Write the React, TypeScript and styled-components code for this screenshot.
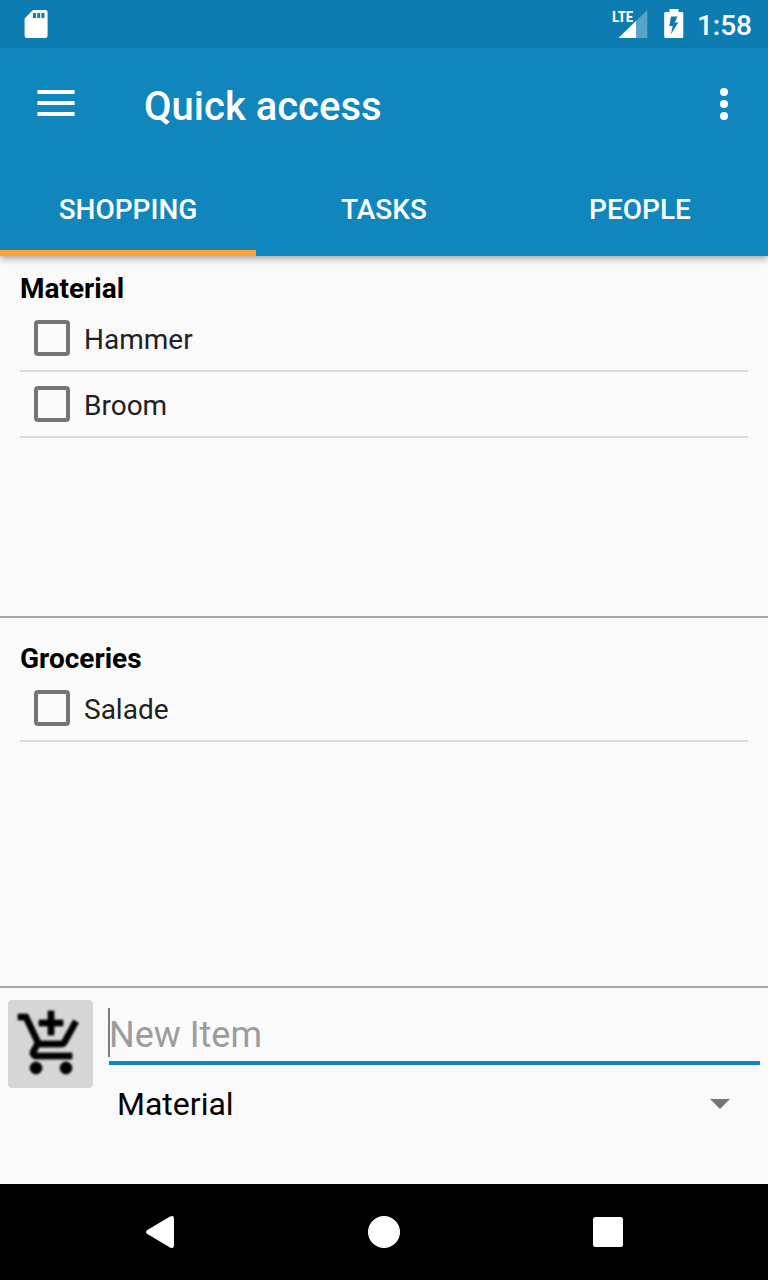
import React, { useState } from "react";
import styled, { createGlobalStyle } from "styled-components";

const color = {
  primary: "#1186bd",
  primaryDark: "#0d7db1",
  accent: "#ffa233",
  page: "#fafafa",
  rule: "#dadada",
  divider: "#a9a9a9",
  control: "#757575",
  hint: "#9c9c9c",
};

const GlobalStyle = createGlobalStyle`
  *, *::before, *::after { box-sizing: border-box; }
  body {
    margin: 0;
    background: ${color.page};
    font-family: Roboto, "Liberation Sans", sans-serif;
    color: #000;
  }
  button, input, select { font-family: inherit; }
  svg { display: block; }
`;

const Screen = styled.div`
  display: flex;
  flex-direction: column;
  min-height: 100vh;
`;

const StatusBar = styled.div`
  position: relative;
  z-index: 1;
  display: flex;
  align-items: center;
  height: 48px;
  padding: 0 16px 0 24px;
  background: ${color.primaryDark};
  color: #fff;
`;

const StatusIcons = styled.div`
  display: flex;
  align-items: center;
  gap: 16px;
  margin-left: auto;
`;

const Clock = styled.time`
  font-size: 28px;
  font-weight: 500;
  line-height: 44px;
  padding-top: 4px;
  margin-left: -3px;
`;

const Header = styled.header`
  position: relative;
  background: ${color.primary};
  color: #fff;
  box-shadow: 0 2px 8px rgba(0, 0, 0, 0.4);
`;

const Toolbar = styled.div`
  display: flex;
  align-items: center;
  height: 112px;
`;

const IconButton = styled.button<{ $width: number }>`
  display: flex;
  align-items: center;
  justify-content: center;
  width: ${(p) => p.$width}px;
  height: 112px;
  padding: 0;
  border: 0;
  background: none;
  color: inherit;
`;

const Title = styled.h1`
  flex: 1;
  margin: 0;
  padding: 6px 0 0 32px;
  font-size: 40px;
  font-weight: 500;
  line-height: 48px;
`;

const Tabs = styled.div`
  display: flex;
  height: 96px;
`;

const Tab = styled.button<{ $active: boolean }>`
  flex: 1;
  padding: 10px 0 0;
  border: 0;
  border-bottom: 6px solid ${(p) => (p.$active ? color.accent : "transparent")};
  background: none;
  color: inherit;
  font-size: 28px;
  font-weight: 500;
  line-height: 32px;
  text-transform: uppercase;
`;

const Main = styled.main`
  display: flex;
  flex: 1;
  flex-direction: column;
`;

const Section = styled.section<{ $spaced: boolean }>`
  flex: 1 0 auto;
  padding: ${(p) => (p.$spaced ? 24 : 16)}px 20px 0;
  border-bottom: 2px solid ${color.divider};
`;

const SectionTitle = styled.h2`
  margin: 0;
  font-size: 28px;
  font-weight: 700;
  line-height: 34px;
`;

const List = styled.ul`
  min-height: 132px;
  margin: 0;
  padding: 0;
  list-style: none;
`;

const Row = styled.li`
  border-bottom: 2px solid ${color.rule};
`;

const ItemLabel = styled.label`
  display: flex;
  align-items: center;
  gap: 14px;
  height: 64px;
  padding-left: 14px;
  color: #212121;
  font-size: 28px;
  line-height: 36px;
`;

const ItemText = styled.span`
  padding-top: 4px;
`;

const Checkbox = styled.input`
  appearance: none;
  width: 36px;
  height: 36px;
  margin: 0;
  border: 4px solid ${color.control};
  border-radius: 4px;

  &:checked {
    border-color: ${color.primary};
    background: ${color.primary};
  }
`;

const Form = styled.form`
  display: flex;
  align-items: flex-start;
  gap: 16px;
  min-height: 196px;
  padding: 12px 8px;
`;

const AddButton = styled.button`
  display: flex;
  align-items: center;
  justify-content: center;
  width: 85px;
  height: 88px;
  padding: 0;
  border: 0;
  border-radius: 4px;
  background: #d6d7d7;
`;

const Fields = styled.div`
  flex: 1;
  min-width: 0;
`;

const FieldBox = styled.div`
  position: relative;
`;

const TextInput = styled.input`
  display: block;
  width: 100%;
  height: 65px;
  padding: 8px 0 0;
  border: 0;
  border-bottom: 4px solid ${color.primary};
  border-radius: 0;
  outline: 0;
  background: none;
  font-size: 36px;
  caret-color: transparent;

  &::placeholder { color: ${color.hint}; opacity: 1; }
`;

const Caret = styled.span`
  position: absolute;
  top: 8px;
  left: -1px;
  width: 2px;
  height: 49px;
  background: #7c7c7c;
`;

const Select = styled.select`
  display: block;
  appearance: none;
  width: 100%;
  height: 78px;
  padding: 0 64px 0 8px;
  border: 0;
  background: none;
  color: #000;
  font-size: 32px;
`;

const SelectArrow = styled.svg`
  position: absolute;
  top: 34px;
  right: 30px;
  pointer-events: none;
`;

const NavBar = styled.nav`
  display: flex;
  height: 96px;
  padding: 0 48px;
  background: #000;
`;

const NavButton = styled.button`
  display: flex;
  flex: 1;
  align-items: center;
  justify-content: center;
  padding: 0;
  border: 0;
  background: none;
`;

const SdCardIcon = () => (
  <svg width="24" height="30" viewBox="0 0 24 30" fill="#fff" aria-hidden="true">
    <path
      fillRule="evenodd"
      d="M9 1h12.4a2.2 2.2 0 0 1 2.2 2.2v23.6a2.2 2.2 0 0 1-2.2 2.2H2.8a2.2 2.2 0 0 1-2.2-2.2V9.4zM9 4v5h3V4zM13.200 4v5h3V4zM17.400 4v5h3V4z"
    />
  </svg>
);

const SignalIcon = () => (
  <svg width="36" height="30" viewBox="0 0 36 30" aria-hidden="true">
    <path d="M35.300 1v28H6.500z" fill="#fff" opacity="0.3" />
    <path d="M24 12v17H6.500z" fill="#fff" />
    <text
      x="0"
      y="13"
      fill="#fff"
      fontSize="15"
      fontWeight="700"
      fontFamily='"Liberation Sans Narrow", "Roboto Condensed", Roboto, sans-serif'
    >
      LTE
    </text>
  </svg>
);

const BatteryIcon = () => (
  <svg width="20" height="30" viewBox="0 0 20 30" fill="#fff" aria-hidden="true">
    <path
      fillRule="evenodd"
      d="M5.500 0h9v3H18a1.300 1.300 0 0 1 1.300 1.300v23.400A1.300 1.300 0 0 1 18 29H1.500A1.300 1.300 0 0 1 .2 27.700V4.300A1.300 1.300 0 0 1 1.500 3h4zM7 7.500L5.200 17h3.500L6.800 25.500L14.300 13.500H10.800L13.500 7.500z"
    />
  </svg>
);

const MenuIcon = () => (
  <svg width="38" height="28" viewBox="0 0 38 28" fill="#fff" aria-hidden="true">
    <path d="M.4 0h37.200v4H.4zM.4 11h37.200v4H.4zM.4 22h37.200v4H.4z" />
  </svg>
);

const MoreIcon = () => (
  <svg width="8" height="32" viewBox="0 0 8 32" fill="#fff" aria-hidden="true">
    <circle cx="4" cy="4" r="4" />
    <circle cx="4" cy="16" r="4" />
    <circle cx="4" cy="28" r="4" />
  </svg>
);

const AddCartIcon = () => (
  <svg width="72" height="72" viewBox="0 0 24 24" aria-hidden="true">
    <filter id="soften" colorInterpolationFilters="sRGB">
      <feGaussianBlur stdDeviation="0.3" />
    </filter>
    <path
      filter="url(#soften)"
      stroke="#000"
      strokeWidth="0.25"
      d="M11 9h2V6h3V4h-3V1h-2v3H8v2h3v3zm-4 9c-1.100 0-1.990.9-1.990 2S5.900 22 7 22s2-.9 2-2-.9-2-2-2zm10 0c-1.100 0-1.990.9-1.990 2s.89 2 1.990 2 2-.9 2-2-.9-2-2-2zm-9.830-3.250l.03-.12.9-1.630h7.450c.75 0 1.410-.41 1.750-1.030l3.860-7.010L19.420 4h-.01l-1.100 2-2.760 5H8.530l-.13-.27L6.160 6l-.95-2-.94-2H1v2h2l3.600 7.590-1.350 2.450c-.16.28-.25.61-.25.96 0 1.100.9 2 2 2h12v-2H7.420c-.13 0-.25-.11-.25-.25z"
    />
  </svg>
);

const tabs = ["Shopping", "Tasks", "People"];
const groups = [
  { name: "Material", items: ["Hammer", "Broom"] },
  { name: "Groceries", items: ["Salade"] },
];

export default function App() {
  const [activeTab, setActiveTab] = useState(tabs[0]);

  return (
    <Screen>
      <GlobalStyle />
      <StatusBar>
        <SdCardIcon />
        <StatusIcons>
          <SignalIcon />
          <BatteryIcon />
          <Clock>1:58</Clock>
        </StatusIcons>
      </StatusBar>
      <Header>
        <Toolbar>
          <IconButton $width={112} aria-label="Open menu">
            <MenuIcon />
          </IconButton>
          <Title>Quick access</Title>
          <IconButton $width={88} aria-label="More options">
            <MoreIcon />
          </IconButton>
        </Toolbar>
        <Tabs role="tablist">
          {tabs.map((tab) => (
            <Tab
              key={tab}
              role="tab"
              aria-selected={tab === activeTab}
              $active={tab === activeTab}
              onClick={() => setActiveTab(tab)}
            >
              {tab}
            </Tab>
          ))}
        </Tabs>
      </Header>
      <Main>
        {groups.map((group, index) => (
          <Section key={group.name} $spaced={index > 0}>
            <SectionTitle>{group.name}</SectionTitle>
            <List>
              {group.items.map((item) => (
                <Row key={item}>
                  <ItemLabel>
                    <Checkbox type="checkbox" />
                    <ItemText>{item}</ItemText>
                  </ItemLabel>
                </Row>
              ))}
            </List>
          </Section>
        ))}
        <Form onSubmit={(event) => event.preventDefault()}>
          <AddButton type="submit" aria-label="Add item">
            <AddCartIcon />
          </AddButton>
          <Fields>
            <FieldBox>
              <TextInput type="text" placeholder="New Item" aria-label="New Item" />
              <Caret />
            </FieldBox>
            <FieldBox>
              <Select aria-label="Category" defaultValue="Material">
                {groups.map((group) => (
                  <option key={group.name}>{group.name}</option>
                ))}
              </Select>
              <SelectArrow width="20" height="10" viewBox="0 0 20 10" aria-hidden="true">
                <path d="M0 0h20L10 10z" fill={color.control} />
              </SelectArrow>
            </FieldBox>
          </Fields>
        </Form>
      </Main>
      <NavBar>
        <NavButton aria-label="Back">
          <svg width="28" height="32" viewBox="0 0 28 32" fill="#fff" aria-hidden="true">
            <path d="M24 .6Q28-1 28 2.500v27Q28 33 24 31.400L1 17.800Q-1 16 1 14.200z" />
          </svg>
        </NavButton>
        <NavButton aria-label="Home">
          <svg width="32" height="32" viewBox="0 0 32 32" fill="#fff" aria-hidden="true">
            <circle cx="16" cy="16" r="16" />
          </svg>
        </NavButton>
        <NavButton aria-label="Recent apps">
          <svg width="30" height="30" viewBox="0 0 30 30" fill="#fff" aria-hidden="true">
            <rect width="30" height="30" rx="2.500" />
          </svg>
        </NavButton>
      </NavBar>
    </Screen>
  );
}
